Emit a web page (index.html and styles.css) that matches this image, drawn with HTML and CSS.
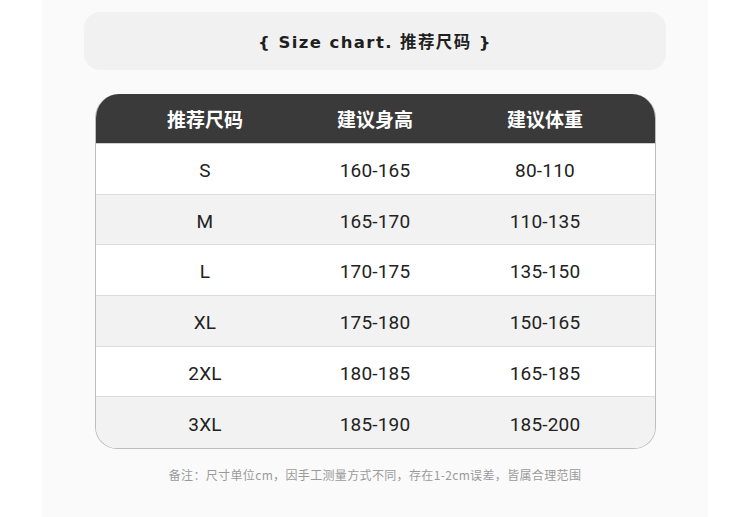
FILE: index.html
```html
<!DOCTYPE html>
<html lang="zh">
<head>
<meta charset="utf-8">
<link rel="stylesheet" href="styles.css">
</head>
<body>
<div class="page">
  <div class="title-pill">
    <span class="title">{ Size chart. 推荐尺码 }</span>
  </div>
  <div class="table">
    <div class="row head">
      <div class="cell">推荐尺码</div>
      <div class="cell">建议身高</div>
      <div class="cell">建议体重</div>
    </div>
    <div class="row">
      <div class="cell">S</div><div class="cell">160-165</div><div class="cell">80-110</div>
    </div>
    <div class="row alt">
      <div class="cell">M</div><div class="cell">165-170</div><div class="cell">110-135</div>
    </div>
    <div class="row">
      <div class="cell">L</div><div class="cell">170-175</div><div class="cell">135-150</div>
    </div>
    <div class="row alt">
      <div class="cell">XL</div><div class="cell">175-180</div><div class="cell">150-165</div>
    </div>
    <div class="row">
      <div class="cell">2XL</div><div class="cell">180-185</div><div class="cell">165-185</div>
    </div>
    <div class="row alt last">
      <div class="cell">3XL</div><div class="cell">185-190</div><div class="cell">185-200</div>
    </div>
  </div>
  <p class="note">备注：尺寸单位cm，因手工测量方式不同，存在1-2cm误差，皆属合理范围</p>
</div>
</body>
</html>
```

FILE: styles.css
```css
html, body {
  margin: 0;
  padding: 0;
  background: #ffffff;
}

.page {
  margin-left: 42px;
  width: 666px;
  height: 517px;
  background: #fafafa;
  padding-top: 12px;
  box-sizing: border-box;
  display: flex;
  flex-direction: column;
  align-items: center;
}

.title-pill {
  width: 582px;
  height: 58px;
  border-radius: 16px;
  background: #f1f1f1;
  display: flex;
  align-items: center;
  justify-content: center;
}

.title {
  font-family: "DejaVu Sans", "Noto Sans CJK SC", sans-serif;
  font-weight: bold;
  font-size: 16.5px;
  color: #1f1f1f;
  letter-spacing: 1.4px;
}

.table {
  margin-top: 24px;
  width: 561px;
  border: 1px solid #bdbdbd;
  border-top: none;
  border-radius: 24px 24px 22px 22px;
  overflow: hidden;
  box-sizing: border-box;
  background: #ffffff;
}

.row {
  display: grid;
  grid-template-columns: 170px 170px 170px;
  justify-content: center;
  height: 50.7px;
  align-items: center;
  border-bottom: 1px solid #dcdcdc;
  box-sizing: border-box;
  background: #ffffff;
}

.row.alt {
  background: #f2f2f2;
}

.row.last {
  border-bottom: none;
}

.row.head {
  background: #3a3a3a;
  height: 50px;
  border-bottom: 1px solid #cfcfcf;
}

.cell {
  text-align: center;
  font-family: "Roboto", "Noto Sans CJK SC", sans-serif;
  font-size: 19px;
  color: #222222;
  font-weight: 400;
  letter-spacing: 0.2px;
  padding-top: 3px;
}

.head .cell {
  color: #ffffff;
  font-family: "Noto Sans CJK SC", sans-serif;
  font-weight: bold;
  font-size: 19px;
  letter-spacing: 0;
  padding-top: 0;
}

.note {
  margin: 17px 0 0;
  font-family: "Noto Sans CJK SC", sans-serif;
  font-size: 12px;
  color: #9a9a9a;
  text-align: center;
  letter-spacing: 0.35px;
}
```
